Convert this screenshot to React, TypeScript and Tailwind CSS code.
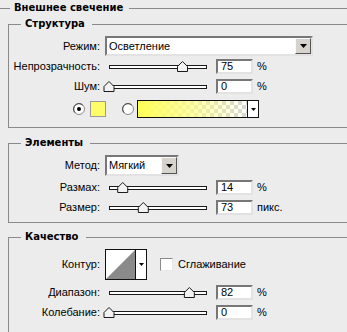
import React from "react";

function Slider({ pct }: { pct: number }) {
  const cx = 6 + (98 * pct) / 100;
  return (
    <svg width="110" height="12" className="block shrink-0">
      <rect x="6.5" y="5.5" width="97" height="3" fill="#ffffff" stroke="#1a1a1a" />
      <polygon
        points={`${cx - 5},11.5 ${cx - 5},6.5 ${cx},1.5 ${cx + 5},6.5 ${cx + 5},11.5`}
        fill="#f2f2f2"
        stroke="#1a1a1a"
      />
    </svg>
  );
}

function Field({ value }: { value: string }) {
  return (
    <div className="ml-[3px] flex h-[15px] w-[37px] items-center border-2 border-[#777] border-b-[#e2e2e2] border-r-[#e2e2e2] bg-white pl-[3px] leading-none">
      {value}
    </div>
  );
}

function Arrow() {
  return (
    <svg width="7" height="4" className="block">
      <polygon points="0,0 7,0 3.5,4" fill="#000" />
    </svg>
  );
}

function DropButton() {
  return (
    <div className="flex h-full w-[16px] items-center justify-center border border-[#fafafa] border-b-[#555] border-r-[#555] bg-[#d6d3cc]">
      <Arrow />
    </div>
  );
}

function Label({ children }: { children: React.ReactNode }) {
  return <div className="w-[92px] shrink-0 pr-[1px] text-right">{children}</div>;
}

function SliderRow({
  label,
  pct,
  value,
  unit,
  className = "",
}: {
  label: string;
  pct: number;
  value: string;
  unit: string;
  className?: string;
}) {
  return (
    <div className={`flex h-[20px] items-center ${className}`}>
      <Label>{label}</Label>
      <div className="ml-[2px]">
        <Slider pct={pct} />
      </div>
      <Field value={value} />
      <span className="ml-[4px]">{unit}</span>
    </div>
  );
}

function Radio({ checked }: { checked?: boolean }) {
  return (
    <svg width="12" height="12" className="block shrink-0">
      <circle cx="6" cy="6" r="5.5" fill="#fff" stroke="#8a8a8a" />
      <path d="M2.2 9.8 A5 5 0 0 1 9.8 2.2" fill="none" stroke="#444" />
      {checked && <circle cx="6" cy="6" r="2" fill="#000" />}
    </svg>
  );
}

// legends use a wider bold face, closer to the original dialog font
const legendFont = { fontFamily: "'DejaVu Sans', 'Liberation Sans', sans-serif" };

function Group({
  title,
  className = "",
  children,
}: {
  title: string;
  className?: string;
  children: React.ReactNode;
}) {
  return (
    <fieldset className={`ml-[8px] border border-r-0 border-[#8a8a8a] ${className}`}>
      <legend
        className="ml-[12px] pl-[4px] pr-[7px] text-[10px] font-bold leading-[14px]"
        style={legendFont}
      >
        {title}
      </legend>
      {children}
    </fieldset>
  );
}

export default function App() {
  return (
    <div
      className="h-[332px] w-[347px] overflow-hidden bg-[#ececec] pt-[1px] text-[11px] text-black"
      style={{ fontFamily: "'Liberation Sans', Arial, sans-serif" }}
    >
      <fieldset className="border-0 border-t border-[#8a8a8a]">
        <legend
          className="ml-[10px] pl-[4px] pr-[6px] text-[10px] font-bold leading-[14px]"
          style={legendFont}
        >
          Внешнее свечение
        </legend>

        <Group title="Структура" className="mt-[2px] pb-[8px] pt-[5px]">
          <div className="flex h-[20px] items-center">
            <Label>Режим:</Label>
            <div className="ml-[4px] flex h-[20px] w-[208px] items-center border-2 border-[#777] border-b-[#e2e2e2] border-r-[#e2e2e2] bg-white">
              <span className="flex-1 pl-[2px]">Осветление</span>
              <DropButton />
            </div>
          </div>
          <SliderRow label="Непрозрачность:" pct={75} value="75" unit="%" />
          <SliderRow label="Шум:" pct={0} value="0" unit="%" />
          <div className="mt-[3px] flex h-[20px] items-center">
            <div className="ml-[64px]">
              <Radio checked />
            </div>
            <div className="ml-[5px] h-[16px] w-[16px] border border-[#9a9a9a] bg-[#fdfd6a]" />
            <div className="ml-[16px]">
              <Radio />
            </div>
            <div className="ml-[3px] flex h-[18px] w-[122px] border border-[#111] bg-[repeating-conic-gradient(#d6d6d6_0%_25%,#ffffff_0%_50%)] bg-[length:8px_8px]">
              <div className="flex-1 bg-gradient-to-r from-[#ffff55] via-[#ffff80]/70 to-transparent" />
              <div className="flex w-[11px] items-center justify-center border-l border-[#111] bg-white">
                <svg width="5" height="3" className="block">
                  <polygon points="0,0 5,0 2.5,3" fill="#000" />
                </svg>
              </div>
            </div>
          </div>
        </Group>

        <Group title="Элементы" className="mt-[8px] pb-[5px] pt-[5px]">
          <div className="flex h-[21px] items-center">
            <Label>Метод:</Label>
            <div className="ml-[4px] flex h-[21px] w-[74px] items-center border-2 border-[#777] border-b-[#e2e2e2] border-r-[#e2e2e2] bg-white">
              <span className="flex-1 pl-[2px]">Мягкий</span>
              <DropButton />
            </div>
          </div>
          <SliderRow label="Размах:" pct={14} value="14" unit="%" className="mt-[1px]" />
          <SliderRow label="Размер:" pct={35} value="73" unit="пикс." />
        </Group>

        <Group title="Качество" className="mt-[7px] pb-[10px] pt-[5px]">
          <div className="flex h-[31px] items-center">
            <Label>Контур:</Label>
            <div className="ml-[4px] flex h-[31px] w-[42px] border border-[#111] bg-white">
              <svg width="29" height="29" className="block">
                <polygon points="0,29 29,0 29,29" fill="#8a8a8a" />
              </svg>
              <div className="flex flex-1 items-center justify-center border-l border-[#111]">
                <svg width="5" height="3" className="block">
                  <polygon points="0,0 5,0 2.5,3" fill="#000" />
                </svg>
              </div>
            </div>
            <div className="ml-[13px] h-[13px] w-[13px] border border-[#8a8a8a] border-b-[#e8e8e8] border-r-[#e8e8e8] bg-white" />
            <span className="ml-[5px]">Сглаживание</span>
          </div>
          <SliderRow label="Диапазон:" pct={82} value="82" unit="%" className="mt-[2px]" />
          <SliderRow label="Колебание:" pct={0} value="0" unit="%" />
        </Group>
      </fieldset>
    </div>
  );
}
